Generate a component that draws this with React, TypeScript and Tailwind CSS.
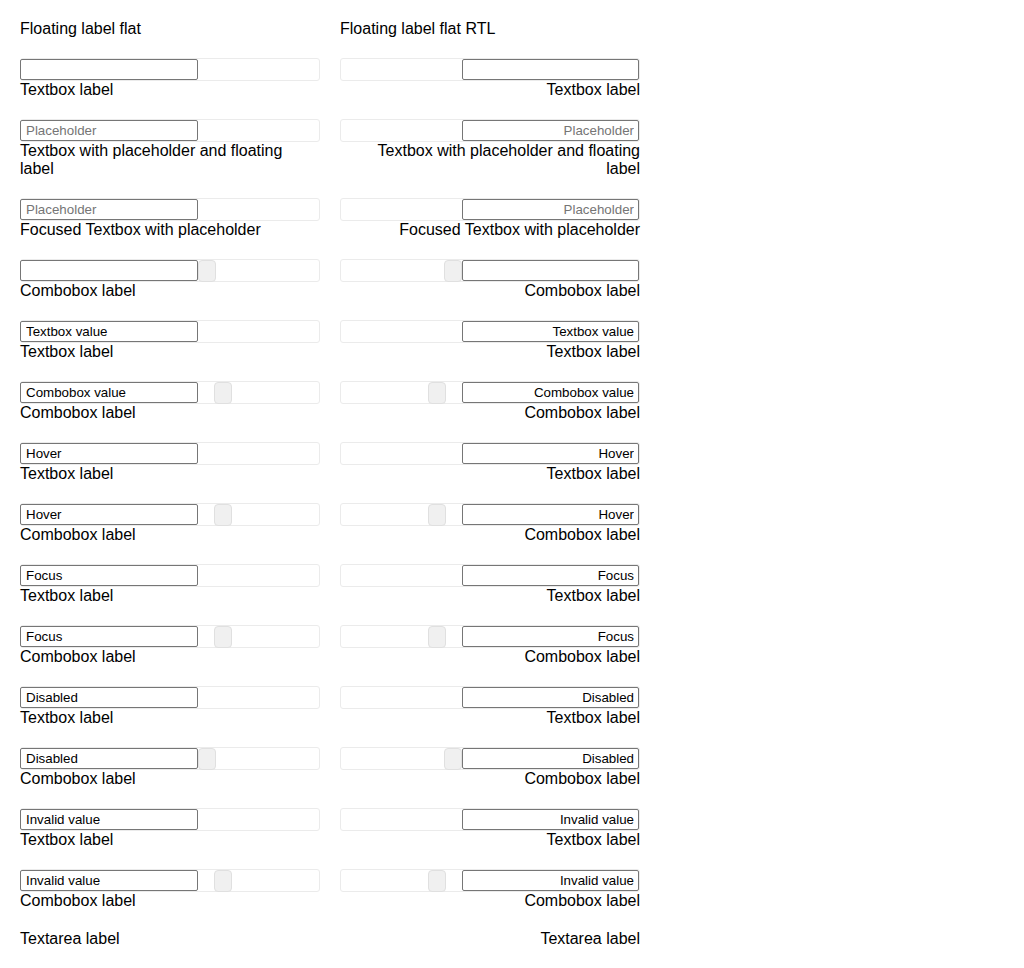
import React from "react";

type Row = {
  value?: string;
  placeholder?: string;
  label: string;
  combo?: "adjacent" | "gap";
};

const rows: Row[] = [
  { label: "Textbox label" },
  { placeholder: "Placeholder", label: "Textbox with placeholder and floating label" },
  { placeholder: "Placeholder", label: "Focused Textbox with placeholder" },
  { label: "Combobox label", combo: "adjacent" },
  { value: "Textbox value", label: "Textbox label" },
  { value: "Combobox value", label: "Combobox label", combo: "gap" },
  { value: "Hover", label: "Textbox label" },
  { value: "Hover", label: "Combobox label", combo: "gap" },
  { value: "Focus", label: "Textbox label" },
  { value: "Focus", label: "Combobox label", combo: "gap" },
  { value: "Disabled", label: "Textbox label" },
  { value: "Disabled", label: "Combobox label", combo: "adjacent" },
  { value: "Invalid value", label: "Textbox label" },
  { value: "Invalid value", label: "Combobox label", combo: "gap" },
];

function Field({ row, rtl }: { row: Row; rtl: boolean }) {
  return (
    <div className="flex flex-col">
      <div
        className={
          rtl
            ? "h-[23px] rounded-[3px] border border-[#ebebeb] flex flex-row-reverse items-start"
            : "h-[23px] rounded-[3px] border border-[#ebebeb] flex flex-row items-start"
        }
      >
        <input
          readOnly
          value={row.value ?? ""}
          placeholder={row.placeholder}
          className={
            rtl
              ? "h-[21px] w-[177px] shrink-0 rounded-[2px] border border-[#767676] bg-white pl-[4px] pr-[4px] text-right text-[13.33px] leading-[15px] text-black outline-none placeholder:text-[#757575] font-['Liberation_Sans',Arial,sans-serif]"
              : "-ml-px h-[21px] w-[178px] shrink-0 rounded-[2px] border border-[#767676] bg-white pl-[5px] pr-[3px] text-left text-[13.33px] leading-[15px] text-black outline-none placeholder:text-[#757575] font-['Liberation_Sans',Arial,sans-serif]"
          }
        />
        {row.combo === "adjacent" && (
          <div className="h-[22px] w-[18px] shrink-0 rounded-[4px] border border-[#e0e0e0] bg-[#f0f0f0]" />
        )}
        {row.combo === "gap" && (
          <div
            className={
              rtl
                ? "mr-[16px] h-[22px] w-[18px] shrink-0 rounded-[4px] border border-[#e0e0e0] bg-[#f0f0f0]"
                : "ml-[16px] h-[22px] w-[18px] shrink-0 rounded-[4px] border border-[#e0e0e0] bg-[#f0f0f0]"
            }
          />
        )}
      </div>
      <div className={rtl ? "text-right leading-[18px]" : "text-left leading-[18px]"}>
        {row.label}
      </div>
    </div>
  );
}

function Column({ rtl }: { rtl: boolean }) {
  return (
    <div className="flex w-[300px] flex-col gap-5">
      <div className="text-left leading-[18px]">
        {rtl ? "Floating label flat RTL" : "Floating label flat"}
      </div>
      {rows.map((r, i) => (
        <Field key={i} row={r} rtl={rtl} />
      ))}
      <div className={rtl ? "text-right leading-[18px]" : "text-left leading-[18px]"}>
        Textarea label
      </div>
    </div>
  );
}

export default function App() {
  return (
    <div className="flex min-h-[968px] w-[1024px] flex-row items-start gap-5 bg-white p-5 text-base text-black font-['Liberation_Sans',Arial,sans-serif]">
      <Column rtl={false} />
      <Column rtl />
    </div>
  );
}
